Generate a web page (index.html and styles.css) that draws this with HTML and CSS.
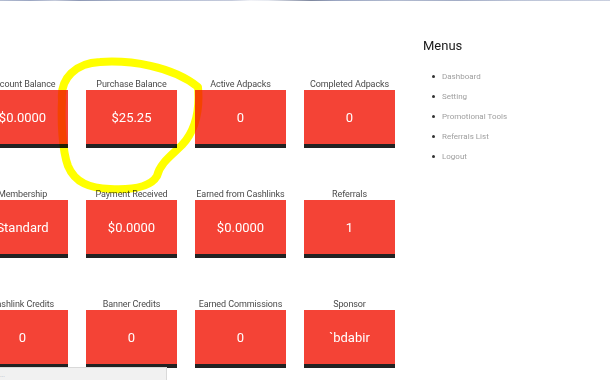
FILE: index.html
```html
<!DOCTYPE html>
<html lang="en">
<head>
<meta charset="utf-8">
<title>Dashboard</title>
<link rel="stylesheet" href="styles.css">
</head>
<body>
<div class="topline"></div>
<div class="page">
  <main class="stats">
    <div class="stat"><div class="label">Account Balance</div><div class="box">$0.0000</div></div>
    <div class="stat"><div class="label">Purchase Balance</div><div class="box">$25.25</div></div>
    <div class="stat"><div class="label">Active Adpacks</div><div class="box">0</div></div>
    <div class="stat"><div class="label">Completed Adpacks</div><div class="box">0</div></div>
    <div class="stat"><div class="label">Membership</div><div class="box">Standard</div></div>
    <div class="stat"><div class="label">Payment Received</div><div class="box">$0.0000</div></div>
    <div class="stat"><div class="label">Earned from Cashlinks</div><div class="box">$0.0000</div></div>
    <div class="stat"><div class="label">Referrals</div><div class="box">1</div></div>
    <div class="stat"><div class="label">Cashlink Credits</div><div class="box">0</div></div>
    <div class="stat"><div class="label">Banner Credits</div><div class="box">0</div></div>
    <div class="stat"><div class="label">Earned Commissions</div><div class="box">0</div></div>
    <div class="stat"><div class="label">Sponsor</div><div class="box">`bdabir</div></div>
  </main>
  <aside class="menus">
    <h2 class="menus-title">Menus</h2>
    <ul class="menu-list">
      <li class="menu-item"><a href="#">Dashboard</a></li>
      <li class="menu-item"><a href="#">Setting</a></li>
      <li class="menu-item"><a href="#">Promotional Tools</a></li>
      <li class="menu-item"><a href="#">Referrals List</a></li>
      <li class="menu-item"><a href="#">Logout</a></li>
    </ul>
  </aside>
</div>
<svg class="scribble" width="610" height="380" viewBox="0 0 610 380">
  <path d="M62,100 C60,78 76,63 100,62 C130,60 172,66 198,87 C200,110 195,131 182,145 C172,155 160,163 157,176 C150,188 130,190 110,189 C90,188 75,183 68,166 C62,150 61,120 62,100 Z" fill="none" stroke="#ffff00" stroke-width="8" stroke-linecap="round" stroke-linejoin="round"/>
</svg>
<div class="statusbar"><span class="status-text">...</span></div>
</body>
</html>
```
FILE: styles.css
```css
html, body {
  margin: 0;
  padding: 0;
  background: #ffffff;
  overflow: hidden;
}
body {
  width: 610px;
  height: 380px;
  font-family: Roboto, "Liberation Sans", sans-serif;
}
.topline {
  height: 1px;
  background: linear-gradient(90deg, #b4bdd2 0%, #9ba6c2 5%, #c5cbdb 9%, #8e99b6 13%, #a9b3ca 20%, #b9c1d6 30%, #c4cadb 38%, #f2f3f7 41%, #e6e9f0 44%, #7f889f 51%, #9ba6c2 55%, #b2bbd0 65%, #a3adc6 75%, #bcc4d7 85%, #c9cfdf 100%);
}
.page {
  display: flex;
  align-items: flex-start;
  gap: 28px;
}
.stats {
  margin-left: -23px;
  padding-top: 77px;
  display: grid;
  grid-template-columns: repeat(4, 91px);
  column-gap: 18px;
  row-gap: 40px;
}
.stat {
  display: flex;
  flex-direction: column;
}
.label {
  height: 12px;
  line-height: 12px;
  font-size: 9px;
  letter-spacing: -0.1px;
  color: #4a4a4a;
  text-align: center;
  white-space: nowrap;
}
.box {
  height: 54px;
  background: #f44336;
  border-bottom: 4px solid #222222;
  color: #ffffff;
  font-size: 13px;
  display: flex;
  align-items: center;
  justify-content: center;
  white-space: nowrap;
}
.menus {
  padding-top: 37px;
}
.menus-title {
  margin: 0;
  font-size: 13px;
  line-height: 16px;
  font-weight: 400;
  color: #1a1a1a;
}
.menu-list {
  list-style: none;
  margin: 12px 0 0 0;
  padding: 0 0 0 9px;
}
.menu-item {
  display: flex;
  align-items: center;
  gap: 7px;
  height: 20px;
  font-size: 8px;
}
.menu-item::before {
  content: "";
  width: 3px;
  height: 3px;
  border-radius: 50%;
  background: #333333;
}
.menu-item a {
  color: #9e9e9e;
  text-decoration: none;
}
.scribble {
  position: absolute;
  left: 0;
  top: 0;
  mix-blend-mode: multiply;
  pointer-events: none;
}
.statusbar {
  position: fixed;
  left: 0;
  bottom: 0;
  width: 166px;
  height: 12px;
  background: #f1f1f1;
  border-top: 1px solid #d9d9d9;
  border-right: 1px solid #d9d9d9;
  display: flex;
  align-items: center;
}
.status-text {
  font-size: 6px;
  color: #8c9bb0;
}
```
